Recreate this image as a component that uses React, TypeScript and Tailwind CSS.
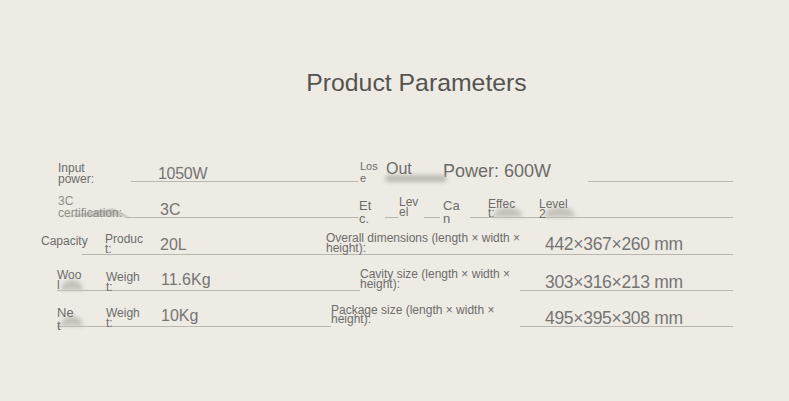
export default function App() {
  const line = 'border-b border-[#bab7b1]';

  return (
    <div className="w-[789px] h-[401px] bg-[#eeebe5] overflow-hidden font-['Liberation_Sans',Arial,sans-serif] text-[#6c6b69]">

      {/* Title */}
      <div className="flex justify-center pl-[44px] pt-[70px]">
        <h1 className="text-[24.8px] leading-[25px] text-[#555350]">Product Parameters</h1>
      </div>

      <div className="mt-[50px]">

        {/* Row 1 */}
        <div className="flex h-[37px]">
          <div className="w-[131px] h-full shrink-0 pl-[58px] pt-[18px] text-[12px] leading-[11px]">
            Input<br />power:
          </div>
          <div className={`w-[227px] h-full shrink-0 pl-[27px] pt-[17px] ${line}`}>
            <span className="text-[16px] leading-[16px] tracking-[-0.3px] text-[#767573]">1050W</span>
          </div>
          <div className="w-[230px] h-full shrink-0 flex items-start">
            <div className="w-[28px] pl-[2px] pt-[15px] text-[11px] leading-[12px]">Los<br />e</div>
            <div className="relative w-[57px] pt-[16px] text-[16px] leading-[16px]">
              <span className="absolute left-0 top-[30px] w-[60px] h-[7px] bg-[#bdbab4] blur-[2px]" />
              <span className="relative">Out</span>
            </div>
            <div className="pt-[17px] text-[18px] leading-[18px]">Power: 600W</div>
          </div>
          <div className={`w-[145px] h-full shrink-0 ${line}`} />
        </div>

        {/* Row 2 */}
        <div className="flex h-[36px]">
          <div className="relative w-[125px] h-full shrink-0 pl-[58px] pt-[13px] text-[12px] leading-[12px] text-[#8e8c89]">
            <span className="absolute left-[62px] top-[26px] w-[68px] h-[9px] bg-[#c4c1bb] blur-[2px] [clip-path:polygon(0_100%,75%_0,100%_100%)]" />
            <span className="relative">3C<br />certification:</span>
          </div>
          <div className={`w-[233px] h-full shrink-0 pl-[35px] pt-[16px] ${line}`}>
            <span className="text-[16px] leading-[16px] text-[#767573]">3C</span>
          </div>
          <div className="w-[27px] h-full shrink-0 pl-[1px] pt-[17px] text-[13px] leading-[13px]">Et<br />c.</div>
          <div className={`w-[13px] h-full shrink-0 ${line}`} />
          <div className="w-[26px] h-full shrink-0 pl-[1px] pt-[15px] text-[12px] leading-[10px]">Lev<br />el</div>
          <div className={`w-[16px] h-full shrink-0 ${line}`} />
          <div className="w-[30px] h-full shrink-0 pl-[3px] pt-[17px] text-[13px] leading-[13px]">Ca<br />n</div>
          <div className={`w-[263px] h-full shrink-0 flex items-start ${line}`}>
            <div className="relative w-[69px] pl-[18px] pt-[18px] text-[12px] leading-[9px]">
              <span className="absolute left-[24px] top-[26px] w-[28px] h-[9px] bg-[#c4c1bb] blur-[2px] rounded-t-full" />
              <span className="relative">Effec<br />t:</span>
            </div>
            <div className="relative pt-[17px] text-[12px] leading-[10px]">
              <span className="absolute left-[6px] top-[26px] w-[30px] h-[9px] bg-[#c4c1bb] blur-[2px] rounded-t-full" />
              <span className="relative">Level<br />2</span>
            </div>
          </div>
        </div>

        {/* Row 3 */}
        <div className="flex h-[37px]">
          <div className="w-[82px] h-full shrink-0 pl-[41px] pt-[17px] text-[12px] leading-[12px]">Capacity</div>
          <div className={`w-[651px] h-full shrink-0 flex items-start ${line}`}>
            <div className="w-[78px] pl-[23px] pt-[17px] text-[12px] leading-[9.5px]">Produc<br />t:</div>
            <div className="w-[166px] pt-[18.5px] text-[16px] leading-[16px] text-[#767573]">20L</div>
            <div className="w-[219px] pt-[16px] text-[12px] leading-[9.5px]">
              Overall dimensions (length × width ×<br />height):
            </div>
            <div className="pt-[17px] text-[17.5px] leading-[18px] tracking-[-0.3px] text-[#767573]">442×367×260 mm</div>
          </div>
        </div>

        {/* Row 4 */}
        <div className="flex h-[36px]">
          <div className="w-[57px] h-full shrink-0" />
          <div className={`w-[303px] h-full shrink-0 flex items-start ${line}`}>
            <div className="relative w-[49px] pt-[15px] text-[12px] leading-[10px]">
              <span className="absolute left-[4px] top-[25px] w-[22px] h-[10px] bg-[#c4c1bb] blur-[2px] rounded-t-full" />
              <span className="relative">Woo<br />l</span>
            </div>
            <div className="w-[55px] pt-[16.5px] text-[12px] leading-[10px]">Weigh<br />t:</div>
            <div className="pt-[17px] text-[16px] leading-[16px] text-[#767573]">11.6Kg</div>
          </div>
          <div className="w-[160px] h-full shrink-0 pt-[14px] text-[12px] leading-[10px]">
            Cavity size (length × width ×<br />height):
          </div>
          <div className={`w-[213px] h-full shrink-0 pl-[25px] pt-[16px] ${line}`}>
            <span className="text-[17.5px] leading-[18px] tracking-[-0.3px] text-[#767573]">303×316×213 mm</span>
          </div>
        </div>

        {/* Row 5 */}
        <div className="flex h-[36px]">
          <div className="w-[57px] h-full shrink-0" />
          <div className={`w-[274px] h-full shrink-0 flex items-start ${line}`}>
            <div className="relative w-[49px] pt-[15px] text-[13px] leading-[13px]">
              <span className="absolute left-[4px] top-[25px] w-[22px] h-[10px] bg-[#c4c1bb] blur-[2px] rounded-t-full" />
              <span className="relative">Ne<br />t</span>
            </div>
            <div className="w-[55px] pt-[16.5px] text-[12px] leading-[10px]">Weigh<br />t:</div>
            <div className="pt-[17px] text-[16px] leading-[16px] text-[#767573]">10Kg</div>
          </div>
          <div className="w-[189px] h-full shrink-0 pt-[15px] text-[12px] leading-[9px]">
            Package size (length × width ×<br />height):
          </div>
          <div className={`w-[213px] h-full shrink-0 pl-[25px] pt-[16px] ${line}`}>
            <span className="text-[17.5px] leading-[18px] tracking-[-0.3px] text-[#767573]">495×395×308 mm</span>
          </div>
        </div>

      </div>
    </div>
  );
}
